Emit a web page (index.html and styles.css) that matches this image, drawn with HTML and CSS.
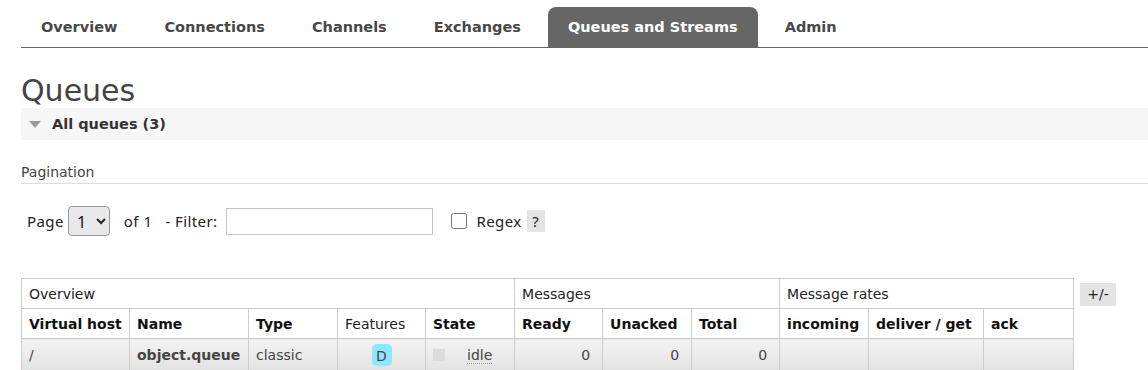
FILE: index.html
```html
<!DOCTYPE html>
<html lang="en">
<head>
<meta charset="UTF-8">
<title>Queues</title>
<link rel="stylesheet" href="styles.css">
</head>
<body>
<!-- top menu -->
<ul class="menu">
    <li><a href="#">Overview</a></li>
    <li><a href="#">Connections</a></li>
    <li><a href="#">Channels</a></li>
    <li><a href="#">Exchanges</a></li>
    <li><a href="#" class="selected">Queues and Streams</a></li>
    <li><a href="#">Admin</a></li>
</ul>

<div class="main">
    <h1>Queues</h1>
    <h2 class="section"><span class="tri"></span>All queues (3)</h2>

    <h3 class="pag-title">Pagination</h3>
    <div class="pager">
        <label>Page</label>
        <select class="page-select"><option>1</option></select>
        <span class="of">of 1</span>
        <label>- Filter:</label>
        <input type="text" class="filter">
        <input type="checkbox" class="regex-box">
        <label>Regex</label>
        <span class="help">?</span>
    </div>

    <div class="table-wrap">
        <table class="list">
            <colgroup>
                <col class="c1"><col class="c2"><col class="c3"><col class="c4"><col class="c5">
                <col class="c6"><col class="c7"><col class="c8">
                <col class="c9"><col class="c10"><col class="c11">
            </colgroup>
            <tr class="group">
                <th colspan="5">Overview</th>
                <th colspan="3">Messages</th>
                <th colspan="3">Message rates</th>
            </tr>
            <tr class="heads">
                <th>Virtual host</th>
                <th>Name</th>
                <th>Type</th>
                <th class="plain">Features</th>
                <th>State</th>
                <th>Ready</th>
                <th>Unacked</th>
                <th>Total</th>
                <th>incoming</th>
                <th>deliver / get</th>
                <th>ack</th>
            </tr>
            <tr class="row">
                <td>/</td>
                <td class="qname">object.queue</td>
                <td class="gray">classic</td>
                <td class="center"><span class="badge">D</span></td>
                <td><span class="state-dot"></span><abbr class="idle">idle</abbr></td>
                <td class="num">0</td>
                <td class="num">0</td>
                <td class="num">0</td>
                <td></td>
                <td></td>
                <td></td>
            </tr>
        </table>
        <span class="toggle">+/-</span>
    </div>
</div>
</body>
</html>
```

FILE: styles.css
```css
*{
    margin: 0;
    padding: 0;
    list-style: none;
    box-sizing: border-box;
}
body{
    font-family: "DejaVu Sans", Verdana, sans-serif;
    color: #333;
    background: #fff;
    overflow: hidden;
}
.menu{
    display: flex;
    gap: 7px;
    margin: 7px 0 0 21px;
    border-bottom: 1px solid #666;
}
.menu a{
    display: block;
    height: 40px;
    line-height: 41px;
    padding: 0 20px;
    font-size: 14.5px;
    font-weight: bold;
    color: #484848;
    text-decoration: none;
}
.menu a.selected{
    background: #666;
    color: #fff;
    border-radius: 8px 8px 0 0;
}
.main{
    padding-left: 21px;
}
h1{
    font-size: 30px;
    font-weight: normal;
    color: #444;
    line-height: 34px;
    padding-top: 2px;
    margin-top: 24px;
}
.section{
    display: flex;
    align-items: center;
    height: 32px;
    background: #f6f6f6;
    font-size: 14.5px;
    font-weight: bold;
    color: #333;
    padding-left: 8px;
}
.tri{
    width: 0;
    height: 0;
    border-left: 6px solid transparent;
    border-right: 6px solid transparent;
    border-top: 7px solid #9a9a9a;
    margin-right: 11px;
}
.pag-title{
    font-size: 14px;
    font-weight: normal;
    color: #444;
    margin-top: 24px;
    padding-bottom: 3px;
    border-bottom: 1px solid #ddd;
}
.pager{
    display: flex;
    align-items: center;
    margin-top: 22px;
    padding-left: 6px;
    font-family: "Noto Sans", "Open Sans", sans-serif;
    font-size: 15px;
    color: #222;
}
.page-select{
    width: 42px;
    height: 30px;
    margin-left: 4px;
    font-family: "Noto Sans", sans-serif;
    font-size: 17px;
    color: #222;
    border: 1px solid #999;
    border-radius: 4px;
    background: #e9e9ed;
    padding-left: 4px;
}
.of{
    margin-left: 14px;
    margin-right: 13px;
    letter-spacing: 0.5px;
}
.pager label{
    letter-spacing: 0.4px;
}
.filter{
    width: 207px;
    height: 27px;
    margin-left: 9px;
    border: 1px solid #c4c4c4;
}
.regex-box{
    width: 16px;
    height: 16px;
    margin: 0 9px 0 18px;
    accent-color: #666;
}
.help{
    margin-left: 5px;
    background: #e4e4e4;
    width: 18px;
    height: 22px;
    line-height: 22px;
    text-align: center;
}
.table-wrap{
    display: flex;
    align-items: flex-start;
    margin-top: 42px;
}
.list{
    width: 1052px;
    table-layout: fixed;
    border-collapse: collapse;
    font-size: 14px;
}
.c1{ width: 108px; }
.c2{ width: 119px; }
.c3{ width: 89px; }
.c4{ width: 88px; }
.c5{ width: 89px; }
.c6{ width: 88px; }
.c7{ width: 89px; }
.c8{ width: 88px; }
.c9{ width: 89px; }
.c10{ width: 115px; }
.c11{ width: 90px; }
.list th, .list td{
    border: 1px solid #ccc;
    height: 30px;
    padding: 0 7px;
    text-align: left;
    white-space: nowrap;
    overflow: hidden;
}
.list tr.group th{
    font-weight: normal;
    color: #222;
}
.list tr.heads th{
    font-weight: bold;
    color: #111;
}
.list tr.heads th.plain{
    font-weight: normal;
    color: #222;
}
.list tr.row td{
    height: 33px;
    background: linear-gradient(#f3f3f3, #e2e2e2);
    color: #444;
}
.list td.qname{
    font-weight: bold;
    color: #111;
}
.list td.gray{
    color: #555;
}
.list td.center{
    text-align: center;
}
.list td.num{
    text-align: right;
    padding-right: 12px;
}
.badge{
    display: inline-block;
    width: 20px;
    height: 22px;
    line-height: 24px;
    border-radius: 5px;
    background: #8ee6ff;
    color: #444;
    text-align: center;
}
.state-dot{
    display: inline-block;
    width: 12px;
    height: 12px;
    background: #dcdcdc;
    vertical-align: -1px;
    margin-right: 22px;
}
.idle{
    text-decoration: none;
    border-bottom: 1px dotted #999;
}
.toggle{
    margin: 5px 0 0 6px;
    width: 36px;
    height: 23px;
    line-height: 23px;
    background: #e4e4e4;
    text-align: center;
    font-size: 14px;
    color: #222;
}
```
